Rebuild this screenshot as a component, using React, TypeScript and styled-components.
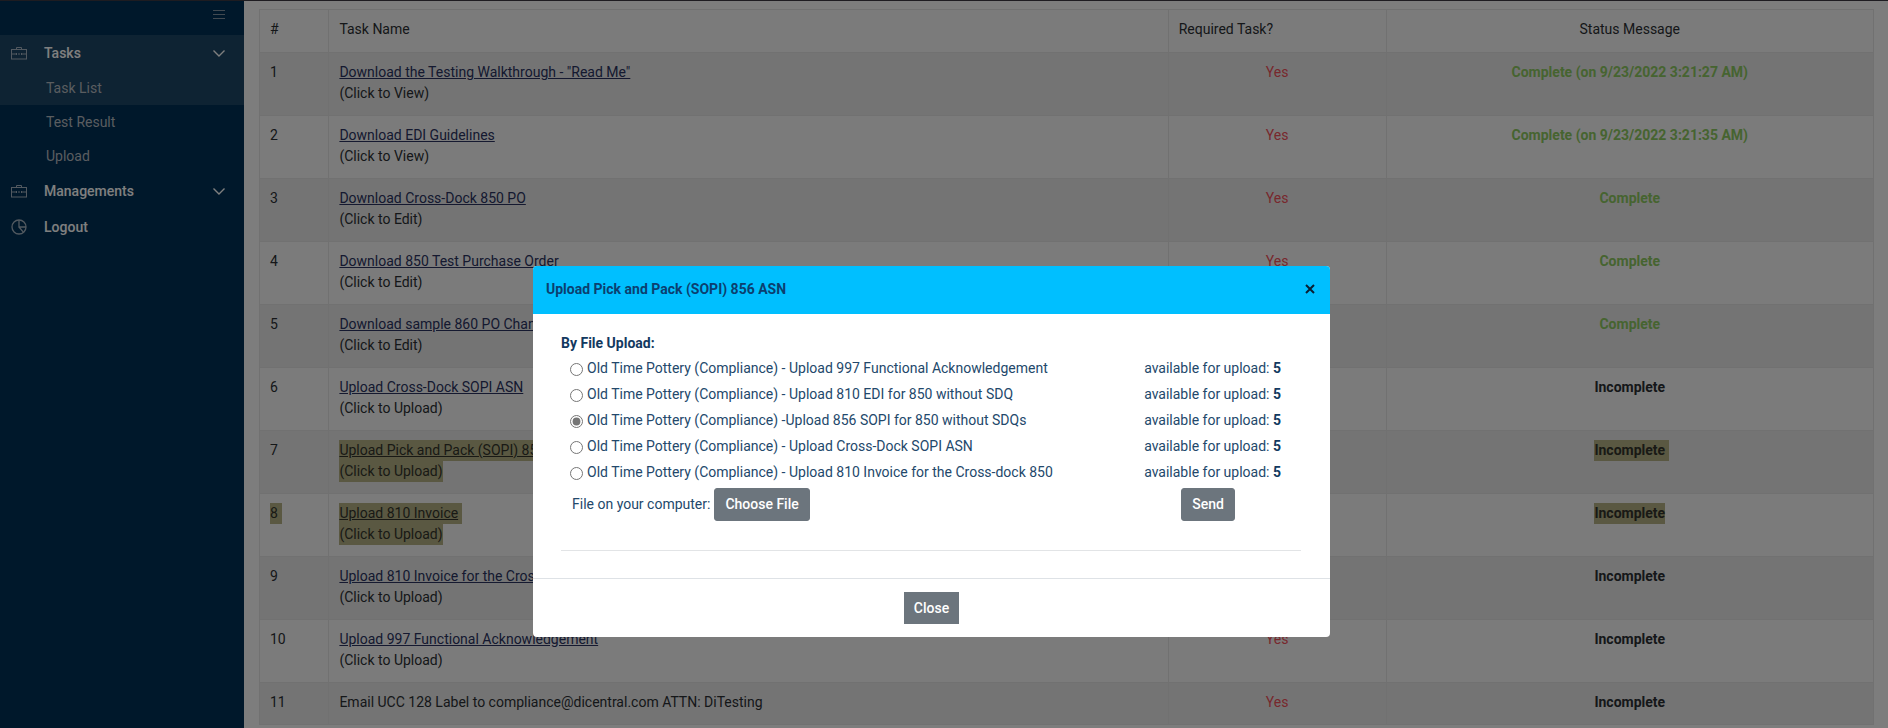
import React, { useState } from "react";
import styled, { createGlobalStyle } from "styled-components";

const GlobalStyle = createGlobalStyle`
  *, *::before, *::after { box-sizing: border-box; }
  html, body, #root { height: 100%; }
  body {
    margin: 0;
    overflow: hidden;
    background: #fafafa;
    color: #2b2f33;
    font-family: Roboto, "Liberation Sans", sans-serif;
    font-size: 14px;
    line-height: 21px;
  }
`;

const Page = styled.div`
  display: flex;
  height: 100%;
  border-top: 1px solid #3c3842;
`;

const Sidebar = styled.nav`
  flex: 0 0 244px;
  background: #003056;
  color: #ffffff;
`;

const SidebarTop = styled.div`
  display: flex;
  justify-content: flex-end;
  height: 34px;
  padding: 5px 17px 0 0;
`;

const MenuToggle = styled.button`
  display: flex;
  height: 16px;
  padding: 0;
  border: 0;
  background: none;
  color: #8494a3;
`;

const MenuGroup = styled.div<{ $active?: boolean }>`
  background: ${(p) => (p.$active ? "#1c4666" : "transparent")};
`;

const MenuItem = styled.a`
  display: grid;
  grid-template-columns: 33px 1fr 14px;
  align-items: center;
  height: 36px;
  padding: 0 18px 0 11px;
  color: #ffffff;
  font-weight: 500;
  text-decoration: none;
`;

const MenuIcon = styled.svg`
  width: 16px;
  height: 16px;
  color: #a4b3c0;
`;

const SubItem = styled.a`
  display: flex;
  align-items: center;
  height: 34px;
  padding-left: 46px;
  color: #b4bac0;
  text-decoration: none;
`;

const Main = styled.main`
  flex: 1;
  min-width: 0;
  padding: 8px 14px 0 15px;
  overflow: hidden;
`;

const TaskTable = styled.table`
  width: 100%;
  table-layout: fixed;
  border-collapse: collapse;
  background: #f7f7f7;
`;

const Row = styled.tr<{ $striped?: boolean }>`
  background: ${(p) => (p.$striped ? "#e9e9e9" : "transparent")};
`;

const HeadCell = styled.th<{ $center?: boolean }>`
  height: 43px;
  padding: 8px 10px 12px;
  border: 1px solid #e3e3e3;
  font-weight: 400;
  text-align: ${(p) => (p.$center ? "center" : "left")};
`;

const Cell = styled.td<{ $center?: boolean }>`
  padding: 9px 10px 11px;
  border: 1px solid #e3e3e3;
  vertical-align: top;
  text-align: ${(p) => (p.$center ? "center" : "left")};
`;

const TaskLink = styled.a`
  color: #2a3260;
  text-decoration: underline;
`;

const Marked = styled.mark<{ $trail?: boolean }>`
  display: inline-block;
  margin-right: ${(p) => (p.$trail ? "-4px" : "0")};
  padding-right: ${(p) => (p.$trail ? "4px" : "0")};
  background: #b4b184;
  color: #33332b;

  ${TaskLink} {
    color: inherit;
  }
`;

const Required = styled.span`
  color: #f0505a;
`;

const Status = styled.span<{ $done: boolean }>`
  color: ${(p) => (p.$done ? "#8cc860" : "inherit")};
  font-weight: 700;
`;

const Backdrop = styled.div`
  position: fixed;
  inset: 0;
  display: flex;
  justify-content: center;
  align-items: flex-start;
  padding: 266px 25px 0 0;
  background: rgba(0, 0, 0, 0.5);
`;

const Dialog = styled.section`
  width: 100%;
  max-width: 797px;
  border-radius: 4px;
  background: #ffffff;
  color: #23486b;
  overflow: hidden;
`;

const DialogHeader = styled.header`
  display: flex;
  align-items: center;
  justify-content: space-between;
  height: 48px;
  padding: 0 14px 2px 13px;
  background: #00bfff;
`;

const DialogTitle = styled.h2`
  margin: 0;
  color: #0b3f70;
  font-size: 14px;
  font-weight: 700;
`;

const DismissButton = styled.button`
  display: flex;
  padding: 0;
  border: 0;
  background: none;
  color: #0a1f33;
`;

const DialogBody = styled.form`
  padding: 19px 29px 27px 28px;
`;

const UploadOptions = styled.fieldset`
  margin: 0;
  padding: 0;
  border: 0;
`;

const OptionsLegend = styled.legend`
  padding: 0 0 1px;
  color: #12395f;
  font-weight: 700;
`;

const OptionRow = styled.div`
  display: flex;
  align-items: center;
  height: 26px;
  padding: 0 20px 0 9px;
`;

const Radio = styled.input`
  width: 13px;
  height: 13px;
  margin: 2px 4px 0 0;
  accent-color: #757575;
`;

const OptionLabel = styled.label`
  flex: 1;
`;

const Count = styled.strong`
  color: #12395f;
  font-weight: 700;
`;

const FileRow = styled.div`
  display: flex;
  align-items: center;
  padding: 3px 66px 29px 11px;
`;

const FileLabel = styled.label`
  flex: 1;
  display: flex;
  align-items: center;
  gap: 4px;
`;

const Button = styled.button<{ $square?: boolean }>`
  height: ${(p) => (p.$square ? "32px" : "33px")};
  padding: 0 ${(p) => (p.$square ? "9px" : "10px")};
  border: 1px solid #6c757d;
  border-radius: ${(p) => (p.$square ? "0" : "3px")};
  background: #6c757d;
  color: #ffffff;
  font: inherit;
  font-weight: 500;
`;

const Divider = styled.hr`
  margin: 0;
  border: 0;
  border-top: 1px solid #e2e4e6;
`;

const DialogFooter = styled.footer`
  display: flex;
  justify-content: center;
  padding: 13px 0;
  border-top: 1px solid #dee2e6;
`;

const BriefcaseIcon = () => (
  <MenuIcon viewBox="0 0 16 16" fill="none" stroke="currentColor" aria-hidden="true">
    <rect x="0.5" y="4.5" width="15" height="9.5" />
    <path d="M5.5 4.5v-2h5v2M1 9h4.5M7 9h2M10.5 9h4.5M5.5 8v2M10.5 8v2" />
  </MenuIcon>
);

const PieIcon = () => (
  <MenuIcon viewBox="0 0 16 16" fill="none" stroke="currentColor" strokeWidth="1.3" aria-hidden="true">
    <circle cx="8" cy="8" r="7" />
    <path d="M8 1v7h7M8 8l4.500 5.400" />
  </MenuIcon>
);

const ChevronIcon = () => (
  <svg width="14" height="14" viewBox="0 0 14 14" fill="none" stroke="currentColor" strokeWidth="1.4" aria-hidden="true">
    <path d="M1.500 4.500L7 10l5.500-5.500" />
  </svg>
);

type Task = {
  name: string;
  hint?: string;
  status: string;
  marks?: { number?: boolean; linkTrail?: boolean; statusTrail?: boolean };
};

const tasks: Task[] = [
  { name: 'Download the Testing Walkthrough - "Read Me"', hint: "(Click to View)", status: "Complete (on 9/23/2022 3:21:27 AM)" },
  { name: "Download EDI Guidelines", hint: "(Click to View)", status: "Complete (on 9/23/2022 3:21:35 AM)" },
  { name: "Download Cross-Dock 850 PO", hint: "(Click to Edit)", status: "Complete" },
  { name: "Download 850 Test Purchase Order", hint: "(Click to Edit)", status: "Complete" },
  { name: "Download sample 860 PO Change", hint: "(Click to Edit)", status: "Complete" },
  { name: "Upload Cross-Dock SOPI ASN", hint: "(Click to Upload)", status: "Incomplete" },
  { name: "Upload Pick and Pack (SOPI) 856 ASN", hint: "(Click to Upload)", status: "Incomplete", marks: { statusTrail: true } },
  { name: "Upload 810 Invoice", hint: "(Click to Upload)", status: "Incomplete", marks: { number: true, linkTrail: true } },
  { name: "Upload 810 Invoice for the Cross-dock 850", hint: "(Click to Upload)", status: "Incomplete" },
  { name: "Upload 997 Functional Acknowledgement", hint: "(Click to Upload)", status: "Incomplete" },
  { name: "Email UCC 128 Label to compliance@dicentral.com ATTN: DiTesting", status: "Incomplete" },
];

const uploads = [
  "Old Time Pottery (Compliance) - Upload 997 Functional Acknowledgement",
  "Old Time Pottery (Compliance) - Upload 810 EDI for 850 without SDQ",
  "Old Time Pottery (Compliance) -Upload 856 SOPI for 850 without SDQs",
  "Old Time Pottery (Compliance) - Upload Cross-Dock SOPI ASN",
  "Old Time Pottery (Compliance) - Upload 810 Invoice for the Cross-dock 850",
];

const TaskRow = ({ task, number }: { task: Task; number: number }) => {
  const { marks } = task;
  const link = <TaskLink href="#">{task.name}</TaskLink>;
  const status = <Status $done={task.status.startsWith("Complete")}>{task.status}</Status>;
  return (
    <Row $striped={number % 2 === 1}>
      <Cell>{marks?.number ? <Marked $trail>{number}</Marked> : number}</Cell>
      <Cell>
        {!task.hint && task.name}
        {task.hint && (
          <>
            {marks ? <Marked $trail={marks.linkTrail}>{link}</Marked> : link}
            <br />
            {marks ? <Marked>{task.hint}</Marked> : task.hint}
          </>
        )}
      </Cell>
      <Cell $center>
        <Required>Yes</Required>
      </Cell>
      <Cell $center>{marks ? <Marked $trail={marks.statusTrail}>{status}</Marked> : status}</Cell>
    </Row>
  );
};

const UploadDialog = () => {
  const [selected, setSelected] = useState(2);
  return (
    <Backdrop>
      <Dialog role="dialog" aria-labelledby="dialog-title">
        <DialogHeader>
          <DialogTitle id="dialog-title">Upload Pick and Pack (SOPI) 856 ASN</DialogTitle>
          <DismissButton type="button" aria-label="Dismiss">
            <svg width="12" height="12" viewBox="0 0 12 12" stroke="currentColor" strokeWidth="2" aria-hidden="true">
              <path d="M2 2l8 8M10 2l-8 8" />
            </svg>
          </DismissButton>
        </DialogHeader>
        <DialogBody>
          <UploadOptions>
            <OptionsLegend>By File Upload:</OptionsLegend>
            {uploads.map((label, i) => (
              <OptionRow key={label}>
                <Radio type="radio" name="upload" id={`upload-${i}`} checked={selected === i} onChange={() => setSelected(i)} />
                <OptionLabel htmlFor={`upload-${i}`}>{label}</OptionLabel>
                <span>
                  available for upload: <Count>5</Count>
                </span>
              </OptionRow>
            ))}
          </UploadOptions>
          <FileRow>
            <FileLabel>
              File on your computer: <Button type="button">Choose File</Button>
            </FileLabel>
            <Button type="submit">Send</Button>
          </FileRow>
          <Divider />
        </DialogBody>
        <DialogFooter>
          <Button type="button" $square>
            Close
          </Button>
        </DialogFooter>
      </Dialog>
    </Backdrop>
  );
};

export default function App() {
  return (
    <>
      <GlobalStyle />
      <Page>
        <Sidebar>
          <SidebarTop>
            <MenuToggle type="button" aria-label="Toggle menu">
              <svg width="16" height="16" viewBox="0 0 16 16" stroke="currentColor" aria-hidden="true">
                <path d="M2 4.500h12M2 8.500h12M2 12.500h12" />
              </svg>
            </MenuToggle>
          </SidebarTop>
          <MenuGroup $active>
            <MenuItem href="#">
              <BriefcaseIcon />
              Tasks
              <ChevronIcon />
            </MenuItem>
            <SubItem href="#">Task List</SubItem>
          </MenuGroup>
          <MenuGroup>
            <SubItem href="#">Test Result</SubItem>
            <SubItem href="#">Upload</SubItem>
          </MenuGroup>
          <MenuGroup>
            <MenuItem href="#">
              <BriefcaseIcon />
              Managements
              <ChevronIcon />
            </MenuItem>
            <MenuItem href="#">
              <PieIcon />
              Logout
            </MenuItem>
          </MenuGroup>
        </Sidebar>
        <Main>
          <TaskTable>
            <colgroup>
              <col style={{ width: "4.3%" }} />
              <col style={{ width: "52%" }} />
              <col style={{ width: "13.5%" }} />
              <col style={{ width: "30.2%" }} />
            </colgroup>
            <thead>
              <tr>
                <HeadCell>#</HeadCell>
                <HeadCell>Task Name</HeadCell>
                <HeadCell>Required Task?</HeadCell>
                <HeadCell $center>Status Message</HeadCell>
              </tr>
            </thead>
            <tbody>
              {tasks.map((task, i) => (
                <TaskRow key={task.name} task={task} number={i + 1} />
              ))}
            </tbody>
          </TaskTable>
        </Main>
      </Page>
      <UploadDialog />
    </>
  );
}
